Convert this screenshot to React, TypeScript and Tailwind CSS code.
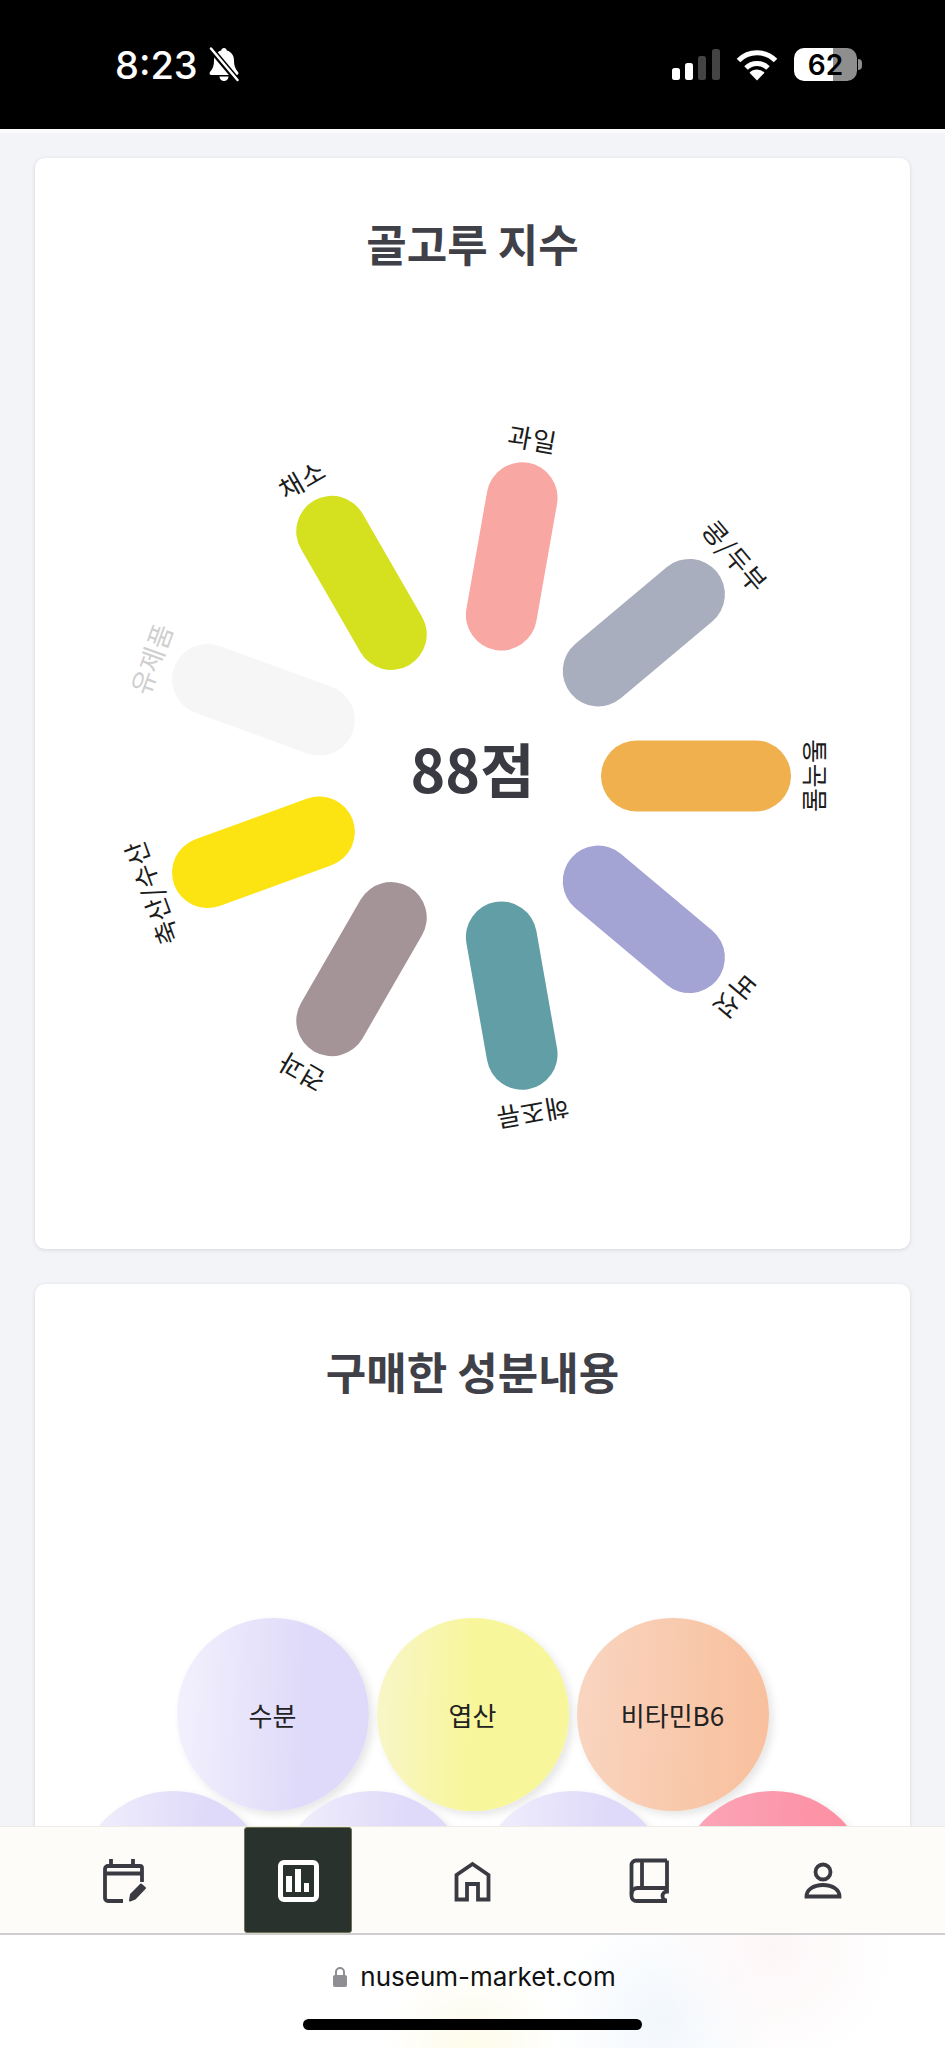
import React from 'react';

const segments = [
  { label: '통곡물', angle: 0, pill: 'bg-[#f0b04d]', text: 'text-[#1c1c1c]' },
  { label: '버섯', angle: 40, pill: 'bg-[#a3a3d4]', text: 'text-[#1c1c1c]' },
  { label: '해조류', angle: 80, pill: 'bg-[#629ea5]', text: 'text-[#1c1c1c]' },
  { label: '견과', angle: 120, pill: 'bg-[#a59497]', text: 'text-[#1c1c1c]' },
  { label: '축산/수산', angle: 160, pill: 'bg-[#fce413]', text: 'text-[#1c1c1c]' },
  { label: '유제품', angle: 200, pill: 'bg-[#f6f6f6]', text: 'text-[#cfcfcf]' },
  { label: '채소', angle: 240, pill: 'bg-[#d5e01e]', text: 'text-[#1c1c1c]' },
  { label: '과일', angle: 280, pill: 'bg-[#f9a7a3]', text: 'text-[#1c1c1c]' },
  { label: '콩/두부', angle: 320, pill: 'bg-[#a8aebd]', text: 'text-[#1c1c1c]' },
];

const bubbleClass = 'flex h-[193px] w-[192px] shrink-0 items-center justify-center rounded-full text-[26px] leading-none text-[#222] shadow-[4px_4px_8px_rgba(0,0,0,0.1)]';

function StatusBar() {
  return (
    <div className="flex h-[129px] shrink-0 items-center justify-between bg-black pl-[115px] pr-[83px] text-white">
      <div className="flex items-center gap-[10px]">
        <span className="font-['Inter',sans-serif] text-[38px] font-medium leading-none">8:23</span>
        <svg width="32" height="35" viewBox="0 0 32 35">
          <path d="M16 1c1.600 0 2.600 1 2.800 2.500C23.500 4.800 26 8.600 26 13.500c0 5 1 8 4 11.500 1 1.300.4 3-1.500 3H3.500C1.600 28 1 26.300 2 25c3-3.500 4-6.500 4-11.500 0-4.900 2.500-8.700 7.200-10C13.400 2 14.400 1 16 1z" fill="#fff" />
          <path d="M11.500 29.500h9a4.500 4.500 0 0 1-9 0z" fill="#fff" />
          <path d="M3 2l26 31" stroke="#000" strokeWidth="6" />
          <path d="M3 1.500l26.500 31.500" stroke="#fff" strokeWidth="2.500" strokeLinecap="round" />
        </svg>
      </div>
      <div className="flex items-center gap-[16px]">
        <svg width="48" height="31" viewBox="0 0 48 31">
          <rect x="0" y="19" width="8" height="12" rx="2.500" fill="#fff" />
          <rect x="13" y="14" width="8" height="17" rx="2.500" fill="#fff" />
          <rect x="26" y="7" width="8" height="24" rx="2.500" fill="#444" />
          <rect x="40" y="0" width="8" height="31" rx="2.500" fill="#444" />
        </svg>
        <svg width="42" height="32" viewBox="0 0 42 32">
          <path d="M2.500 11.500a26 26 0 0 1 37 0" fill="none" stroke="#fff" strokeWidth="5" />
          <path d="M10 19a15.500 15.500 0 0 1 22 0" fill="none" stroke="#fff" strokeWidth="5" />
          <path d="M21 31.500l-7.500-7.800a10.500 10.500 0 0 1 15 0z" fill="#fff" />
        </svg>
        <div className="flex items-center gap-[1px]">
          <div className="flex h-[33px] w-[63px] items-center justify-center rounded-[10px] bg-[linear-gradient(90deg,#fff_0,#fff_62%,#8e8e8e_62%)] font-['Inter',sans-serif] text-[28px] font-semibold leading-none text-black">
            62
          </div>
          <div className="h-[11px] w-[4px] rounded-r-full bg-[#8e8e8e]" />
        </div>
      </div>
    </div>
  );
}

function Wheel() {
  return (
    <div className="relative mt-[106px] h-[800px] w-full">
      {segments.map((s) => (
        <React.Fragment key={s.label}>
          <div
            className={`absolute left-1/2 top-1/2 h-[71px] w-[190px] rounded-full ${s.pill}`}
            style={{ transform: `translate(-50%, -50%) rotate(${s.angle}deg) translateX(223px)` }}
          />
          <span
            className={`absolute left-1/2 top-1/2 whitespace-nowrap text-[26px] leading-none tracking-[0.5px] ${s.text}`}
            style={{ transform: `translate(-50%, -50%) rotate(${s.angle}deg) translateX(343px) rotate(90deg)` }}
          >
            {s.label}
          </span>
        </React.Fragment>
      ))}
      <div className="absolute left-1/2 top-[calc(50%-9px)] -translate-x-1/2 -translate-y-1/2 whitespace-nowrap text-[59px] font-bold leading-none text-[#3a3a42]">
        88점
      </div>
    </div>
  );
}

function BottomNav() {
  return (
    <nav className="grid h-[107px] shrink-0 grid-cols-5 border-t border-[#ecebe6] bg-[#fdfcf8] px-[35px]">
      <div className="flex items-center justify-center">
        <svg width="48" height="48" viewBox="-2 -1 48 48" fill="none" stroke="#3a3a42" strokeWidth="3.800">
          <path d="M10 2v7M32 2v7M22 44H7a3 3 0 0 1-3-3V12a3 3 0 0 1 3-3h32a2 2 0 0 1 2 2v14M4 16.500h37" />
          <path d="M29 43.500l1-6 10-10 4 3.500-10 10.500z" fill="#3a3a42" stroke="#3a3a42" strokeWidth="2" strokeLinejoin="round" />
        </svg>
      </div>
      <div className="flex items-center justify-center">
        <div className="flex h-full w-[108px] items-center justify-center rounded-[3px] border border-[#6f6f52] bg-[#29322c]">
          <svg width="48" height="48" viewBox="0 0 48 48" fill="none">
            <rect x="6.500" y="6.500" width="36" height="37" rx="3.500" stroke="#fff" strokeWidth="5" />
            <rect x="12" y="20" width="6" height="16" fill="#fff" />
            <rect x="21" y="13" width="6" height="23" fill="#fff" />
            <rect x="30" y="27" width="5" height="9" fill="#fff" />
          </svg>
        </div>
      </div>
      <div className="flex items-center justify-center">
        <svg width="48" height="48" viewBox="-4 -4 48 48" fill="none" stroke="#3a3a42" strokeWidth="3.800">
          <path d="M14 39.500H3.500V15L19.500 4l16 11v24.500H25V24H14z" />
        </svg>
      </div>
      <div className="flex items-center justify-center">
        <svg width="48" height="48" viewBox="-4 -1 48 48" fill="none" stroke="#3a3a42" strokeWidth="3.800">
          <path d="M39 3.500H8a4.500 4.500 0 0 0-4.500 4.500v31a5 5 0 0 0 5 5H39" />
          <path d="M14 3.500V31M3.500 37A6 6 0 0 1 9.500 31H39V3.500M39 31v3.500a4.500 4.500 0 0 0 0 9" />
        </svg>
      </div>
      <div className="flex items-center justify-center">
        <svg width="48" height="48" viewBox="-4 -4 48 48" fill="none" stroke="#3a3a42" strokeWidth="3.800">
          <circle cx="20" cy="12" r="7.500" />
          <path d="M3.500 36.500C3.500 30 10 25 20 25s16.500 5 16.500 11.500z" />
        </svg>
      </div>
    </nav>
  );
}

function UrlBar() {
  return (
    <div className="flex h-[115px] shrink-0 flex-col items-center border-t-2 border-[#cfcfcf] bg-[radial-gradient(circle_at_50%_100%,#fdfbe9_0,transparent_90px),radial-gradient(circle_at_82%_12%,#fdf6f7_0,transparent_120px),radial-gradient(circle_at_70%_75%,#f2f7fc_0,transparent_110px),linear-gradient(#fff,#fff)]">
      <div className="mt-[26px] flex items-center gap-[13px] pl-[4px]">
        <svg width="14" height="20" viewBox="0 0 14 20">
          <path d="M3 8V5a4 4 0 0 1 8 0v3" fill="none" stroke="#8e8e93" strokeWidth="2" />
          <rect x="0" y="8" width="14" height="12" rx="2" fill="#8e8e93" />
        </svg>
        <span className="font-['Inter',sans-serif] text-[26px] leading-[32px] text-[#111]">nuseum-market.com</span>
      </div>
      <div className="mt-[26px] h-[11px] w-[339px] rounded-full bg-black" />
    </div>
  );
}

export default function App() {
  return (
    <div className="flex h-[2048px] w-[945px] flex-col overflow-hidden bg-[#f3f4f8] font-['Noto_Sans_CJK_KR',sans-serif]">
      <StatusBar />
      <main className="min-h-0 flex-1 overflow-hidden border-t-4 border-[#fbfbfc] px-[35px] pt-[25px]">
        <section className="rounded-[10px] bg-white pb-[73px] pt-[58px] shadow-[0_1px_4px_rgba(0,0,0,0.12)]">
          <h1 className="text-center text-[44px] font-semibold leading-[54px] text-[#404048]">골고루 지수</h1>
          <Wheel />
        </section>
        <section className="mt-[35px] rounded-[10px] bg-white pb-[80px] pt-[60px] shadow-[0_1px_4px_rgba(0,0,0,0.12)]">
          <h1 className="text-center text-[44px] font-semibold leading-[54px] text-[#404048]">구매한 성분내용</h1>
          <div className="mt-[220px] flex flex-col items-center">
            <div className="flex gap-[8px]">
              <div className={`${bubbleClass} bg-[linear-gradient(92deg,#f3f1fd,#dfdaf9_65%)]`}>수분</div>
              <div className={`${bubbleClass} bg-[linear-gradient(92deg,#f8f6c8,#f8f69a_50%)]`}>엽산</div>
              <div className={`${bubbleClass} bg-[linear-gradient(92deg,#f9d5c0,#f8bf9c)]`}>비타민B6</div>
            </div>
            <div className="-mt-[20px] flex gap-[8px]">
              <div className={`${bubbleClass} bg-[linear-gradient(92deg,#f3f1fd,#dfdaf9_65%)]`} />
              <div className={`${bubbleClass} bg-[linear-gradient(92deg,#f3f1fd,#dfdaf9_65%)]`} />
              <div className={`${bubbleClass} bg-[linear-gradient(92deg,#f3f1fd,#dfdaf9_65%)]`} />
              <div className={`${bubbleClass} bg-[linear-gradient(92deg,#fba8ba,#fd8a9f)]`} />
            </div>
          </div>
        </section>
      </main>
      <BottomNav />
      <UrlBar />
    </div>
  );
}
